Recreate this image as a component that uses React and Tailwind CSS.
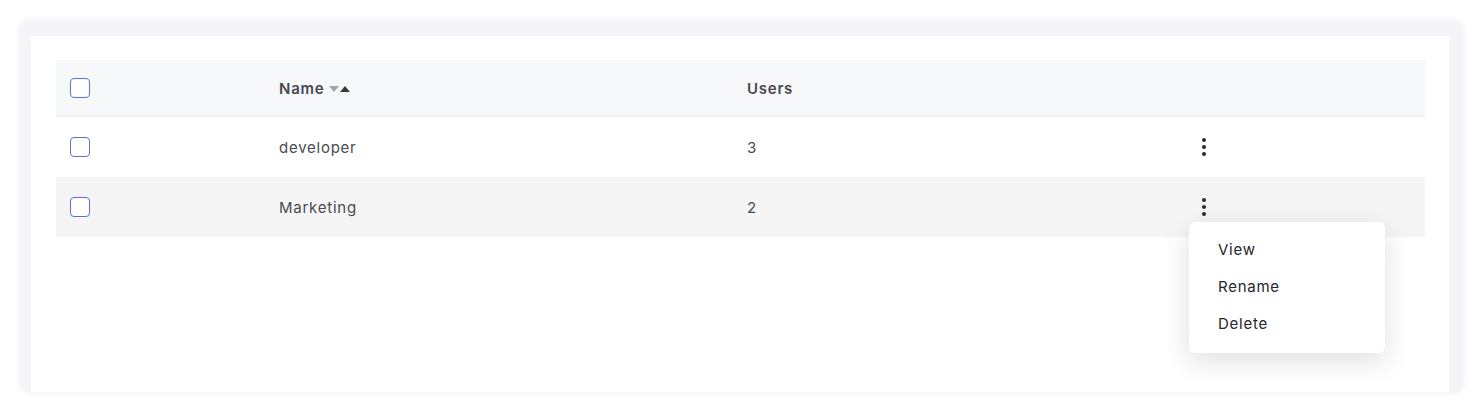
import React from "react";

const rows = [
  { name: "developer", users: 3 },
  { name: "Marketing", users: 2 },
];

const Checkbox = () => (
  <span className="block w-5 h-5 rounded-[4px] border-[1.5px] border-[#5d6fd8] bg-white" />
);

const Kebab = () => (
  <button className="flex flex-col items-center gap-[2.5px] w-[6px]">
    <span className="w-[4.5px] h-[4.5px] rounded-full bg-[#2b2b30]" />
    <span className="w-[4.5px] h-[4.5px] rounded-full bg-[#2b2b30]" />
    <span className="w-[4.5px] h-[4.5px] rounded-full bg-[#2b2b30]" />
  </button>
);

const App = () => {
  const font = { fontFamily: "Inter, 'Noto Sans', sans-serif" };

  return (
    <div className="w-[1483px] h-[412px] bg-white pt-5 px-5" style={font}>
      <div className="h-[372px] rounded-[10px] bg-[#f5f5f9] shadow-[0_0_6px_rgba(0,0,0,0.08)] pt-4 pl-[11px] pr-[14px] overflow-hidden flex flex-col">
        <div className="flex-1 bg-white rounded-t-[4px] pt-6 pl-[25px] pr-6">
          {/* Table head */}
          <div className="grid grid-cols-[223px_468px_454px_1fr] items-center h-[57px] bg-[#f7f8fa] border-b-2 border-[#eff0f4]">
            <div className="pl-[14px]">
              <Checkbox />
            </div>
            <div className="flex items-center gap-[5px] text-[15px] font-semibold tracking-[0.05em] text-[#48484e] pt-[3px]">
              Name
              <span className="flex items-center">
                <span className="w-0 h-0 border-x-[5.5px] border-x-transparent border-t-[6px] border-t-[#a3a3a8]" />
                <span className="w-0 h-0 border-x-[5.5px] border-x-transparent border-b-[6px] border-b-[#38383d] ml-[1px]" />
              </span>
            </div>
            <div className="text-[15px] font-semibold tracking-[0.05em] text-[#48484e] pt-[3px]">Users</div>
            <div />
          </div>

          {/* Rows */}
          {rows.map((row, i) => (
            <div
              key={row.name}
              className={`grid grid-cols-[223px_468px_454px_1fr] items-center h-[60px] text-[15px] tracking-[0.05em] text-[#4a4a50] ${
                i % 2 === 1 ? "bg-[#f5f5f6]" : "bg-white"
              }`}
            >
              <div className="pl-[14px]">
                <Checkbox />
              </div>
              <div className="pt-[2px]">{row.name}</div>
              <div className="pt-[2px]">{row.users}</div>
              <div className="relative flex items-center">
                <Kebab />
                {i === 1 && (
                  <div className="absolute left-[-12px] top-[24px] z-10 w-[196px] h-[131px] bg-white rounded-[6px] shadow-[0_8px_28px_rgba(0,0,0,0.13)] pl-[29px] pt-[16px] flex flex-col gap-[14px] text-[15px] text-[#26262b]">
                    <span className="leading-[23px]">View</span>
                    <span className="leading-[23px]">Rename</span>
                    <span className="leading-[23px]">Delete</span>
                  </div>
                )}
              </div>
            </div>
          ))}
        </div>
      </div>
    </div>
  );
};

export default App;
